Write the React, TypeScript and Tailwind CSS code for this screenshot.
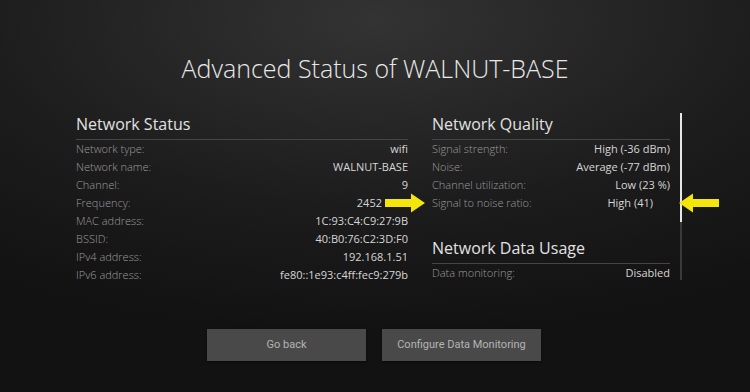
import React from 'react';

const statusRows = [
  ['Network type:', 'wifi'],
  ['Network name:', 'WALNUT-BASE'],
  ['Channel:', '9'],
  ['Frequency:', '2452 MHz'],
  ['MAC address:', '1C:93:C4:C9:27:9B'],
  ['BSSID:', '40:B0:76:C2:3D:F0'],
  ['IPv4 address:', '192.168.1.51'],
  ['IPv6 address:', 'fe80::1e93:c4ff:fec9:279b'],
];

const qualityRows = [
  ['Signal strength:', 'High (-36 dBm)'],
  ['Noise:', 'Average (-77 dBm)'],
  ['Channel utilization:', 'Low (23 %)'],
  ['Signal to noise ratio:', 'High (41)'],
];

const Row = ({ label, value, padRight }: { label: string; value: string; padRight?: boolean }) => (
  <div className="flex justify-between h-[18px] items-center">
    <span className="text-[11px] font-light text-[#9c9c9c]">{label}</span>
    <span className={`text-[11px] text-[#d6d6d6] ${padRight ? 'pr-[17px]' : ''}`}>{value}</span>
  </div>
);

const Header = ({ title }: { title: string }) => (
  <div className="h-[27px] border-b border-[#454545] text-[16px] leading-[22px] text-[#e2e2e2]">{title}</div>
);

// yellow callout arrow, pointing right unless flipped
const Arrow = ({ flip }: { flip?: boolean }) => (
  <svg width="40" height="20" viewBox="0 0 40 20" className={flip ? 'rotate-180' : ''}>
    <path d="M0 6 H26 V0.5 L40 10 L26 19.5 V14 H0 Z" fill="#f4e60a" />
  </svg>
);

export default function App() {
  return (
    <div
      className="relative w-[750px] h-[392px] overflow-hidden bg-[radial-gradient(ellipse_90%_80%_at_50%_5%,#333333,#1c1c1c_60%,#121212)]"
      style={{ fontFamily: '"Open Sans", "Liberation Sans", sans-serif' }}
    >
      <h1 className="pt-[51px] text-center text-[25px] leading-[34px] font-light text-[#e8e8e8]">
        Advanced Status of WALNUT-BASE
      </h1>

      <div className="flex mt-[28px] ml-[76px]">
        <div className="w-[332px]">
          <Header title="Network Status" />
          {statusRows.map(([l, v]) => (
            <Row key={l} label={l} value={v} />
          ))}
        </div>
        <div className="w-[238px] ml-[24px]">
          <Header title="Network Quality" />
          {qualityRows.map(([l, v], i) => (
            <Row key={l} label={l} value={v} padRight={i === 3} />
          ))}
          <div className="mt-[25px]">
            <Header title="Network Data Usage" />
            <Row label="Data monitoring:" value="Disabled" />
          </div>
        </div>
        <div className="ml-[10px] w-[2px] h-[167px] bg-[#3a3a3a] flex flex-col">
          <div className="h-[109px] bg-[#e6e6e6]" />
        </div>
      </div>

      <div className="flex justify-center gap-[16px] mt-[45px] ml-[-2px]" style={{ fontFamily: 'Roboto, "Liberation Sans", sans-serif' }}>
        <button className="w-[159px] h-[32px] bg-[#494949] text-[#b4b4b4] text-[11px] shadow-[0_1px_2px_rgba(0,0,0,0.5)]">Go back</button>
        <button className="w-[159px] h-[32px] bg-[#494949] text-[#b4b4b4] text-[11px] shadow-[0_1px_2px_rgba(0,0,0,0.5)]">Configure Data Monitoring</button>
      </div>

      <div className="absolute left-[385px] top-[193px]">
        <Arrow />
      </div>
      <div className="absolute left-[679px] top-[193px]">
        <Arrow flip />
      </div>
    </div>
  );
}
